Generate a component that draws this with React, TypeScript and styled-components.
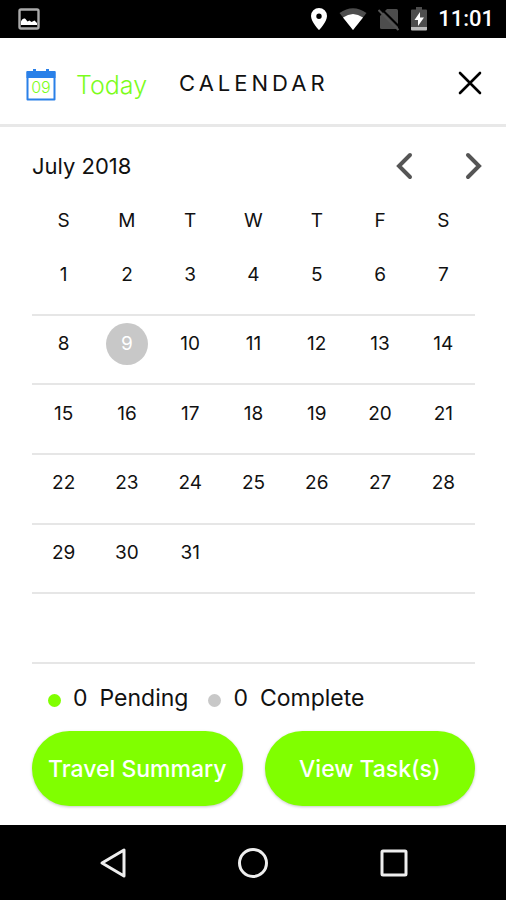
import React from "react";
import styled, { createGlobalStyle } from "styled-components";

const Global = createGlobalStyle`
  *, *::before, *::after { box-sizing: border-box; }
  body { margin: 0; background: #fff; }
  button { font: inherit; color: inherit; border: 0; padding: 0; background: none; cursor: pointer; }
`;

const Screen = styled.div`
  min-height: 100vh;
  display: flex;
  flex-direction: column;
  background: #fff;
  color: #111;
  font-family: Inter, "Liberation Sans", sans-serif;
`;

const StatusBar = styled.div`
  height: 38px;
  flex: none;
  padding: 0 12px 0 18px;
  display: flex;
  align-items: center;
  justify-content: space-between;
  background: #000;
  color: #fff;
`;

const StatusIcons = styled.div`
  display: flex;
  align-items: center;
  gap: 11px;
  svg { display: block; }
`;

const Clock = styled.time`
  font: 500 22px/38px Roboto, sans-serif;
`;

const Header = styled.header`
  height: 89px;
  padding: 3px 24px 0 26px;
  display: flex;
  align-items: center;
  border-bottom: 3px solid #e8e8e8;
`;

const TodayButton = styled.button`
  padding-top: 4px;
  display: flex;
  align-items: center;
  gap: 20px;
  color: #7cfc1c;
  font: 300 25px/32px Inter, sans-serif;
  svg { display: block; }
`;

const Title = styled.h1`
  flex: 1;
  margin: 0 0 0 32px;
  font-size: 22px;
  line-height: 32px;
  font-weight: 400;
  letter-spacing: 4px;
`;

const IconButton = styled.button`
  display: flex;
  svg { display: block; }
`;

const Main = styled.main`
  flex: 1;
  padding: 23px 31px 19px 32px;
  display: flex;
  flex-direction: column;
`;

const MonthBar = styled.div`
  height: 32px;
  margin-right: -8px;
  display: flex;
  align-items: center;
  justify-content: space-between;
`;

const Month = styled.h2`
  margin: 0;
  font-size: 22px;
  line-height: 32px;
  font-weight: 400;
`;

const MonthNav = styled.div`
  display: flex;
  gap: 48px;
`;

const CalendarTable = styled.table`
  width: 100%;
  height: 464px;
  margin-top: 18px;
  table-layout: fixed;
  border-collapse: separate;
  border-spacing: 0;
`;

const Weekday = styled.th`
  height: 46px;
  padding: 9px 0 0;
  vertical-align: top;
  font-size: 19px;
  line-height: 24px;
  font-weight: 400;
`;

const DayCell = styled.td`
  height: 69px;
  padding: 7px 0 0;
  vertical-align: top;
  border-bottom: 2px solid #e6e6e6;
`;

const Day = styled.button<{ $selected?: boolean }>`
  display: block;
  width: 42px;
  height: 42px;
  margin: 0 auto;
  border-radius: 50%;
  font-size: 19px;
  background: ${(p) => (p.$selected ? "#c8c8c8" : "transparent")};
  color: ${(p) => (p.$selected ? "#fff" : "#111")};
`;

const Legend = styled.div`
  padding: 18px 16px 0;
  display: flex;
  gap: 20px;
  font-size: 23px;
  line-height: 32px;
`;

const LegendItem = styled.div`
  display: flex;
  align-items: center;
`;

const Dot = styled.span<{ $color: string }>`
  width: 13px;
  height: 13px;
  margin: 4px 12px 0 0;
  border-radius: 50%;
  background: ${(p) => p.$color};
`;

const Count = styled.span`
  margin-right: 12px;
`;

const Actions = styled.div`
  margin-top: 17px;
  display: grid;
  grid-template-columns: 1fr 1fr;
  gap: 22px;
`;

const ActionButton = styled.button`
  height: 75px;
  border-radius: 38px;
  background: #80ff00;
  color: #fff;
  font-size: 23px;
  font-weight: 500;
  white-space: nowrap;
  box-shadow: 0 1px 3px rgba(0, 0, 0, 0.22);
`;

const SystemNav = styled.nav`
  height: 75px;
  flex: none;
  padding: 0 96px;
  display: flex;
  align-items: center;
  justify-content: space-between;
  background: #000;
`;

const DateIcon = () => (
  <svg width="30" height="32" viewBox="0 0 30 32" aria-hidden="true">
    <path d="M1.5 3v27.5h27V3" fill="#fff" stroke="#2a80e8" strokeWidth="2" strokeLinejoin="round" />
    <path d="M.5 2h29v7H.5zM7 0h3v3H7zM20 0h3v3h-3z" fill="#2a80e8" />
    <text x="15" y="24" textAnchor="middle" fontFamily="Inter, sans-serif" fontSize="16" fontWeight="300" fill="#7cfc1c">09</text>
  </svg>
);

const PictureIcon = () => (
  <svg width="22" height="22" viewBox="0 0 22 22" aria-hidden="true">
    <rect x="1.5" y="1.5" width="19" height="19" rx="1.5" fill="none" stroke="#aaa" strokeWidth="2.4" />
    <path d="M3 17v-3.500c1-2.500 3-3.500 4.500-2.500l2 2.500 2-1 2 1.500 3-1.500 2.500 2.500v2z" fill="#fff" />
  </svg>
);

const PinIcon = () => (
  <svg width="18" height="24" viewBox="0 0 18 24" aria-hidden="true">
    <path fillRule="evenodd" d="M9 1a8 8 0 0 0-8 8c0 6 8 14 8 14s8-8 8-14a8 8 0 0 0-8-8zm0 5.500a2.700 2.700 0 1 1 0 5.400 2.700 2.700 0 0 1 0-5.400z" fill="#fff" />
  </svg>
);

const WifiIcon = () => (
  <svg width="28" height="24" viewBox="0 0 28 24" aria-hidden="true">
    <path d="M0.500 6Q14-3.500 27.500 6L14 23z" fill="#4d4d4d" />
    <path d="M4 10.500Q14 3.500 24 10.500L14 23z" fill="#fff" />
  </svg>
);

const NoSimIcon = () => (
  <svg width="22" height="24" viewBox="0 0 22 24" aria-hidden="true">
    <path d="M9 2h9.500Q20 2 20 3.500v17Q20 22 18.500 22h-15Q2 22 2 20.500V9z" fill="#4d4d4d" />
    <path d="M3.500 2L22.500 21" stroke="#000" strokeWidth="2" />
    <path d="M.5 3L20.500 23" stroke="#555" strokeWidth="2" />
  </svg>
);

const BatteryIcon = () => (
  <svg width="16" height="24" viewBox="0 0 16 24" aria-hidden="true">
    <path d="M5 0h6v2.500h4q1 0 1 1V21H0V3.500q0-1 1-1h4z" fill="#4d4d4d" />
    <path d="M0 20h16v2.500q0 1-1 1H1q-1 0-1-1z" fill="#bbb" />
    <path d="M9 5l-5.500 8H7v6l6-8.500H9z" fill="#fff" />
  </svg>
);

const Chevron = ({ d }: { d: string }) => (
  <svg width="20" height="28" viewBox="0 0 20 28" fill="none" stroke="#555" strokeWidth="4" strokeLinecap="round" aria-hidden="true">
    <path d={d} />
  </svg>
);

const weekdays = ["S", "M", "T", "W", "T", "F", "S"];
const weeks = Array.from({ length: 6 }, (_, w) =>
  Array.from({ length: 7 }, (_, d) => w * 7 + d + 1)
);
const today = 9;

export default function App() {
  return (
    <Screen>
      <Global />
      <StatusBar>
        <PictureIcon />
        <StatusIcons>
          <PinIcon />
          <WifiIcon />
          <NoSimIcon />
          <BatteryIcon />
          <Clock>11:01</Clock>
        </StatusIcons>
      </StatusBar>
      <Header>
        <TodayButton type="button">
          <DateIcon />
          Today
        </TodayButton>
        <Title>CALENDAR</Title>
        <IconButton type="button" aria-label="Close">
          <svg width="24" height="24" viewBox="0 0 24 24" stroke="#000" strokeWidth="2.600" strokeLinecap="round" aria-hidden="true">
            <path d="M2 2l20 20M22 2L2 22" />
          </svg>
        </IconButton>
      </Header>
      <Main>
        <MonthBar>
          <Month>July 2018</Month>
          <MonthNav>
            <IconButton type="button" aria-label="Previous month">
              <Chevron d="M15 3L4 14l11 11" />
            </IconButton>
            <IconButton type="button" aria-label="Next month">
              <Chevron d="M5 3l11 11L5 25" />
            </IconButton>
          </MonthNav>
        </MonthBar>
        <CalendarTable aria-label="July 2018">
          <thead>
            <tr>
              {weekdays.map((name, i) => (
                <Weekday key={i} scope="col">{name}</Weekday>
              ))}
            </tr>
          </thead>
          <tbody>
            {weeks.map((week, i) => (
              <tr key={i}>
                {week.map((day) => (
                  <DayCell key={day}>
                    {day <= 31 && (
                      <Day type="button" $selected={day === today}>{day}</Day>
                    )}
                  </DayCell>
                ))}
              </tr>
            ))}
          </tbody>
        </CalendarTable>
        <Legend>
          <LegendItem>
            <Dot $color="#80ff00" />
            <Count>0</Count>
            Pending
          </LegendItem>
          <LegendItem>
            <Dot $color="#c8c8c8" />
            <Count>0</Count>
            Complete
          </LegendItem>
        </Legend>
        <Actions>
          <ActionButton type="button">Travel Summary</ActionButton>
          <ActionButton type="button">View Task(s)</ActionButton>
        </Actions>
      </Main>
      <SystemNav aria-label="System">
        <IconButton type="button" aria-label="Back">
          <svg width="32" height="32" viewBox="0 0 32 32" fill="none" stroke="#eee" strokeWidth="3" strokeLinejoin="round">
            <path d="M28 3v26L6 16z" />
          </svg>
        </IconButton>
        <IconButton type="button" aria-label="Home">
          <svg width="32" height="32" viewBox="0 0 32 32" fill="none" stroke="#eee" strokeWidth="3">
            <circle cx="16" cy="16" r="13.500" />
          </svg>
        </IconButton>
        <IconButton type="button" aria-label="Recent apps">
          <svg width="32" height="32" viewBox="0 0 32 32" fill="none" stroke="#eee" strokeWidth="3" strokeLinejoin="round">
            <rect x="4" y="4" width="24" height="24" rx="1" />
          </svg>
        </IconButton>
      </SystemNav>
    </Screen>
  );
}
